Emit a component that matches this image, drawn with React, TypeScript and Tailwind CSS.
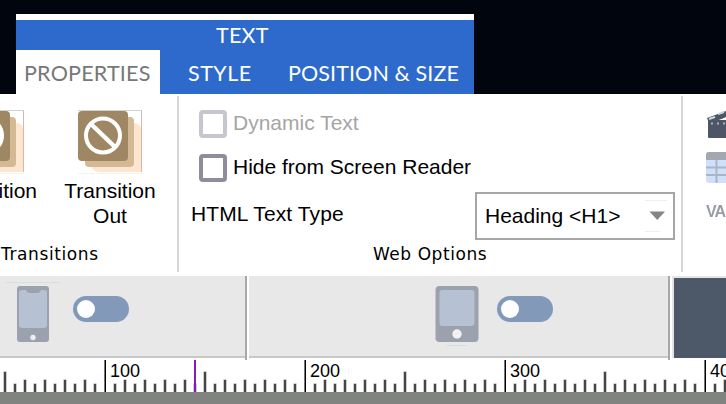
import React from "react";

const arial = "font-['Liberation_Sans',Arial,sans-serif]";

function Header() {
  return (
    <header className="h-[94px] bg-[#01050d] pl-4 pt-3.5 font-['Lato',sans-serif] text-[21.5px] leading-none text-white">
      <div className="h-20 w-[458px] border-t-[6px] border-white bg-[#2e6acb]">
        <div className="h-[30px] pl-[200px] pt-[5px] tracking-[0.2px]">TEXT</div>
        <nav className="flex h-11">
          <button className="w-36 bg-white pl-2 pt-1 text-left tracking-[0.2px] text-[#777]">PROPERTIES</button>
          <button className="w-[112px] pl-7 pt-1 text-left tracking-[0.5px]">STYLE</button>
          <button className="grow whitespace-nowrap pl-4 pt-1 text-left tracking-[0.1px]">POSITION &amp; SIZE</button>
        </nav>
      </div>
    </header>
  );
}

function TransitionIcon() {
  return (
    <svg width="64" height="64" viewBox="0 0 64 64" className="shrink-0">
      <rect width="64" height="64" fill="#fff" />
      <path d="M56 13Q63 14 64 20V62H20Q15 61 13 56Z" fill="#fce6cf" />
      <rect x="7" y="7" width="49" height="50" rx="4" fill="#d3b994" />
      <rect x="0" y="1" width="50" height="50" rx="4" fill="#a08763" />
      <path d="M0 .5H64" stroke="#d2d2d2" />
      <path d="M63.5 1V62" stroke="#ddb5a8" />
      <path d="M0 63.5H64" stroke="#f3f3f3" />
      <circle cx="25" cy="25.500" r="17" fill="none" stroke="#fff" strokeWidth="4" />
      <path d="M13 14L37 37" stroke="#fff" strokeWidth="4.500" />
    </svg>
  );
}

function Transitions() {
  return (
    <section className="flex h-[176px] w-[179px] shrink-0 flex-col border-r-2 border-[#d7d7d7] pt-[14px]">
      <div className="flex h-[120px]">
        <div className="flex w-[42px] shrink-0 flex-col items-end">
          <div className="mr-[18px]"><TransitionIcon /></div>
          <div className="mr-[5px] mt-[4px] text-[21px] leading-[25px]">Transition</div>
        </div>
        <div className="ml-[18px] flex w-[100px] flex-col items-center text-center">
          <TransitionIcon />
          <div className="mt-[4px] text-[21px] leading-[25px]">Transition<br />Out</div>
        </div>
      </div>
      <div className="mt-[14px] pl-px font-['DejaVu_Sans',sans-serif] text-[17px] leading-5 tracking-[0.6px]">Transitions</div>
    </section>
  );
}

function Check({ label, disabled }: { label: string; disabled?: boolean }) {
  return (
    <label className={"flex h-11 items-start pl-5 text-[21px] leading-none " + (disabled ? "text-[#a5a5a5]" : "text-black")}>
      <span className={"size-7 shrink-0 rounded border-4 bg-white " + (disabled ? "border-[#c7c6ce]" : "border-[#8e8d9b]")} />
      <span className="ml-1.5 whitespace-nowrap pt-0.5">{label}</span>
    </label>
  );
}

function WebOptions() {
  return (
    <section className="flex h-[176px] w-[504px] shrink-0 flex-col border-r-2 border-[#d7d7d7] pt-3.5">
      <Check label="Dynamic Text" disabled />
      <Check label="Hide from Screen Reader" />
      <div className="-mt-[6px] flex h-12 justify-between pl-3 pr-1.5">
        <span className="pt-[11px] text-[21px] leading-none tracking-[0.1px]">HTML Text Type</span>
        <div className="flex h-12 w-[200px] items-center justify-between border-2 border-[#a6a6a6] pl-2 pr-[5px]">
          <span className="whitespace-nowrap pb-px text-[21px] leading-none">Heading &lt;H1&gt;</span>
          <svg width="24" height="32" viewBox="0 0 24 32">
            <path d="M1 .5H23M1 31.500H16" stroke="#eee" />
            <path d="M5.500 11.500H21L13.250 20Z" fill="#858585" />
          </svg>
        </div>
      </div>
      <div className="mt-[4px] pl-[194px] font-['DejaVu_Sans',sans-serif] text-[17px] leading-5 tracking-[0.55px]">Web Options</div>
    </section>
  );
}

function Insert() {
  return (
    <section className="flex w-[43px] shrink-0 flex-col overflow-hidden pl-[23px] pt-[13px]">
      <svg width="32" height="30" viewBox="0 0 32 30" className="blur-[0.4px]">
        <path d="M1 9L28-1V6L3 14Z" fill="#4c5666" />
        <path d="M3 10L9 8M12 5L18 3" stroke="#d5d8dd" strokeWidth="2" />
        <path d="M14 11L20 8V11Z" fill="#fff" />
        <rect x="2" y="11" width="30" height="18" rx="1" fill="#4c5666" />
        <path d="M5 14.500H32" stroke="#a9b0bb" strokeWidth="2" strokeDasharray="2 4" />
      </svg>
      <svg width="32" height="32" viewBox="0 0 32 32" className="mt-[12px] blur-[0.5px]">
        <rect x="0" y="1" width="32" height="31" rx="3" fill="#cfe0f8" />
        <path d="M0 9V4Q0 1 3 1H32V9Z" fill="#a2a7b2" />
        <path d="M0 16.500H32M0 24H32M10.500 9V32" fill="none" stroke="#a9b5c6" strokeWidth="2" />
      </svg>
      <span className="mt-[21px] text-[16px] font-bold leading-none tracking-[-1px] text-[#979da7] blur-[0.6px]">VAR</span>
    </section>
  );
}

function Toggle() {
  return (
    <div className="mt-5 flex h-[26px] w-14 shrink-0 items-center rounded-full bg-[#8399b9] pl-1">
      <span className="size-[18px] rounded-full bg-white" />
    </div>
  );
}

function Devices() {
  return (
    <div className="flex h-[84px] bg-white">
      <section className="flex h-[84px] w-[247px] shrink-0 border-r-2 border-[#a8a8a8]">
        <div className="flex h-[82px] grow border-b-2 border-[#c8c8c8] bg-[#e8e8e8]">
          <svg width="60" height="78" viewBox="0 0 60 78" className="mr-[13px] shrink-0 blur-[0.3px]">
            <path d="M6 6.500H60" stroke="#dcdcdc" />
            <rect x="17" y="10" width="32" height="56" rx="3" fill="#9ca2ad" />
            <path d="M22 14H26Q27 17 30 17H37Q40 17 41 14H44Q47 14 47 17V49Q47 52 44 52H22Q19 52 19 49V17Q19 14 22 14" fill="#b6c1d3" />
            <circle cx="33" cy="61.500" r="2.700" fill="#eee" />
          </svg>
          <Toggle />
        </div>
      </section>
      <section className="ml-0.5 flex h-[84px] w-[421px] shrink-0 border-r-2 border-[#a8a8a8]">
        <div className="flex h-[82px] grow border-b-2 border-[#c8c8c8] bg-[#e8e8e8] pl-[180px]">
          <svg width="56" height="78" viewBox="0 0 56 78" className="mr-3 shrink-0 blur-[0.3px]">
            <rect x="6.500" y="10" width="43" height="56" rx="4" fill="#9ca2ad" />
            <rect x="10.500" y="14" width="35" height="36" rx="3" fill="#b6c1d3" />
            <circle cx="28" cy="58" r="4.700" fill="#f1f1f1" />
            <path d="M18 69.500H38" stroke="#d7dde4" />
          </svg>
          <Toggle />
        </div>
      </section>
      <div className="ml-0.5 h-[82px] grow border-l-2 border-t-2 border-[#e5e5e5] bg-[#4d5869]" />
    </div>
  );
}

const ticks = Array.from({ length: 73 }, (_, i) => i);

function Ruler() {
  return (
    <footer className="h-11 bg-white">
      <svg width="726" height="44" viewBox="0 0 726 44" className="block font-['Liberation_Sans',sans-serif] text-[18px]">
        {ticks.map((i) => {
          const x = i * 10 + 4;
          const major = i % 20 === 10;
          const half = i % 20 === 0;
          const h = major ? 32 : half ? 20 : i % 2 === 0 ? 12 : 8;
          return major ? (
            <g key={i}>
              <rect x={x} y="0" width="1" height="32" fill="#777" />
              <rect x={x + 1} y="0" width="1" height="32" fill="#000" />
            </g>
          ) : (
            <g key={i}>
              <rect x={x - 0.5} y={31.5 - h} width="3" height={h + 1} fill="#999" />
              <rect x={x} y={32 - h} width="2" height={h} fill="#454545" />
            </g>
          );
        })}
        {[100, 200, 300, 400].map((n) => (
          <text key={n} x={n * 2 - 90} y="17">{n}</text>
        ))}
        <rect x="194" y="0" width="2" height="32" fill="#881bb8" />
        <rect y="32" width="726" height="12" fill="#80837f" />
      </svg>
    </footer>
  );
}

export default function App() {
  return (
    <main className={"h-[404px] w-[726px] overflow-hidden bg-white text-black " + arial}>
      <Header />
      <div className="flex h-[182px] pt-0.5">
        <Transitions />
        <WebOptions />
        <Insert />
      </div>
      <Devices />
      <Ruler />
    </main>
  );
}
